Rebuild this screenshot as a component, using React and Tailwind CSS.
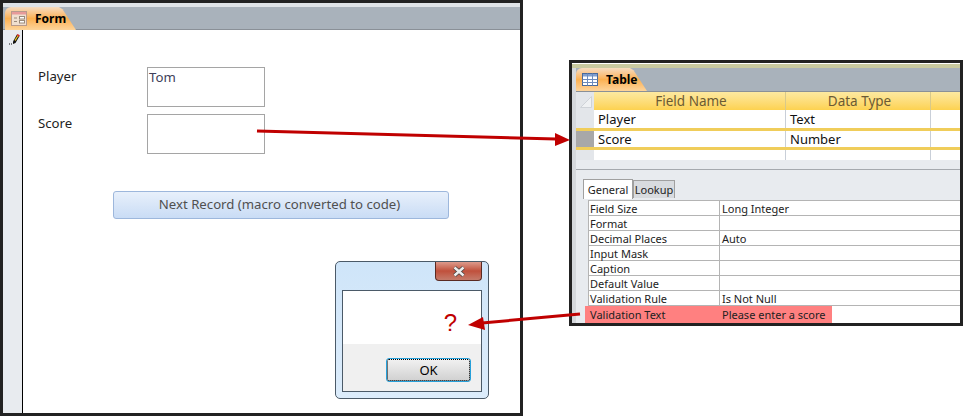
import React from "react";

const propRows = [
  ["Field Size", "Long Integer"],
  ["Format", ""],
  ["Decimal Places", "Auto"],
  ["Input Mask", ""],
  ["Caption", ""],
  ["Default Value", ""],
  ["Validation Rule", "Is Not Null"],
];

function FormIcon() {
  return (
    <svg width="16" height="15" viewBox="0 0 16 15" className="shrink-0">
      <rect x="0.5" y="0.5" width="15" height="14" fill="#f0dfcf" stroke="#b89a8c" />
      <rect x="1" y="1" width="14" height="2.5" fill="#e89a9a" />
      <path d="M3 7h3M3 10.5h3" stroke="#9a8a7a" />
      <rect x="8.5" y="5.5" width="5" height="2.5" fill="#fff" stroke="#9a8a7a" />
      <rect x="8.5" y="9.5" width="5" height="2.5" fill="#fff" stroke="#9a8a7a" />
    </svg>
  );
}

function TableIcon() {
  return (
    <svg width="16" height="13" viewBox="0 0 16 13" className="shrink-0">
      <rect x="0.5" y="0.5" width="15" height="12" fill="#fff" stroke="#4a6a9a" />
      <rect x="1" y="1" width="14" height="2.5" fill="#7f9fd0" />
      <path d="M0.5 6.5h15M0.5 9.5h15M5.5 0.5v12M10.5 0.5v12" stroke="#6d8cbc" />
    </svg>
  );
}

function PencilIcon() {
  return (
    <svg width="13" height="12" viewBox="0 0 13 12">
      <path d="M5 8.5 L9 1.5 L11.5 3 L7.5 10 L5 11 Z" fill="#111" />
      <path d="M8.5 2.5 L9.6 1 L11.8 2.3 L10.8 4 Z" fill="#d12020" />
      <path d="M6.5 7 L9.5 2.5 L10.5 3 L7.5 8 Z" fill="#e8c020" />
      <path d="M1 11h1M3 11h1" stroke="#111" />
    </svg>
  );
}

function Tab({ icon, label }) {
  return (
    <div className="flex h-[23px] w-[71px] items-center gap-[8px] rounded-tl-[6px] bg-gradient-to-b from-[#f6dcc0] via-[#fbb050] to-[#fdd49a] pl-[6px] text-[12px] font-bold text-black [clip-path:polygon(0_0,76%_0,81%_10%,100%_100%,0_100%)]">
      {icon}
      <span>{label}</span>
    </div>
  );
}

export default function App() {
  return (
    <div className="relative flex h-[416px] w-[968px] items-start overflow-hidden bg-white font-['Noto_Sans',sans-serif] text-[13px] text-[#222]">
      {/* form window */}
      <div className="flex h-[416px] w-[523px] shrink-0 flex-col border-[3px] border-[#222]">
        <div className="h-[4px] bg-[#dfe3e7]"></div>
        <div className="h-[23px] border-b border-[#8a9097] bg-[#a9b2bb] pl-[2px]">
          <Tab icon={<FormIcon />} label="Form" />
        </div>
        <div className="flex flex-1">
          <div className="w-[20px] border-r border-black bg-[#e8ebef] pl-[5px] pt-[3px]">
            <PencilIcon />
          </div>
          <div className="relative flex-1 pl-[15px] pt-[37px] text-[13.2px]">
            <div className="flex h-[47px] items-start">
              <span className="w-[109px] leading-[18px]">Player</span>
              <div className="h-[40px] w-[118px] border border-[#a5a5a5] pl-[1px] leading-[18px] text-[#40405a]">
                Tom
              </div>
            </div>
            <div className="flex h-[47px] items-start">
              <span className="w-[109px] leading-[18px]">Score</span>
              <div className="h-[40px] w-[118px] border border-[#a5a5a5]"></div>
            </div>
            <button className="ml-[75px] mt-[30px] block h-[28px] w-[336px] rounded-[3px] border border-[#9db7dc] bg-gradient-to-b from-[#e8f0fb] to-[#c9dcf5] pr-[3px] text-[#505050]">
              Next Record (macro converted to code)
            </button>

            {/* message box floating over the form */}
            <div className="absolute left-[312px] top-[231px] flex h-[138px] w-[154px] flex-col rounded-[5px] border border-[#4b5a68] bg-gradient-to-b from-[#cfe5f9] to-[#dcecfb] px-[6px] pb-[6px]">
              <div className="flex h-[28px] justify-end">
                <div className="flex h-[19px] w-[47px] items-center justify-center rounded-b-[4px] border border-t-0 border-[#5a2a22] bg-gradient-to-b from-[#dc9a8c] via-[#c0503c] to-[#c47a6a]">
                  <svg width="14" height="11" viewBox="0 0 14 11">
                    <path d="M2.5 1.5 L11.5 9.5 M11.5 1.5 L2.5 9.5" stroke="#444" strokeWidth="4" />
                    <path d="M2.5 1.5 L11.5 9.5 M11.5 1.5 L2.5 9.5" stroke="#eee" strokeWidth="2.4" />
                  </svg>
                </div>
              </div>
              <div className="flex flex-1 flex-col border border-[#4b5a68] bg-white">
                <div className="flex h-[53px] items-start justify-end pr-[24px] pt-[17px] font-['Liberation_Sans',sans-serif] text-[24px] leading-[30px] text-[#c00000]">
                  ?
                </div>
                <div className="flex flex-1 items-start justify-end bg-[#f0f0f0] pr-[10px] pt-[14px]">
                  <button className="h-[24px] w-[85px] rounded-[3px] border border-[#26a0da] bg-gradient-to-b from-[#f2f2f2] to-[#d0d0d0] text-[13px] leading-[20px] text-black outline-1 -outline-offset-2 outline-dotted outline-black">
                    OK
                  </button>
                </div>
              </div>
            </div>
          </div>
        </div>
      </div>

      {/* table design window */}
      <div className="ml-[46px] mt-[60px] flex h-[266px] w-[394px] shrink-0 flex-col overflow-hidden border-[3px] border-[#222] bg-[#e8ebef]">
        <div className="h-px shrink-0 bg-white"></div>
        <div className="h-[4px] shrink-0 bg-[#c9caa0]"></div>
        <div className="flex flex-1 flex-col border-l-[4px] border-[#d5d8dc]">
          <div className="h-[24px] border-b border-[#8a9097] bg-[#a9b2bb]">
            <Tab icon={<TableIcon />} label="Table" />
          </div>
          <div className="flex h-[18px] text-[13.5px] text-[#6b5a34]">
            <div className="flex w-[18px] items-end justify-end bg-[#e3e6ea] p-[2px]">
              <svg width="12" height="12" viewBox="0 0 12 12">
                <path d="M11.5 0.5 V11.5 H0.5 Z" fill="#eff1f3" stroke="#cfd3d8" />
              </svg>
            </div>
            <div className="w-[192px] border-r border-[#d8c98a] bg-gradient-to-b from-[#fde9a0] to-[#fdd24f] pl-[3px] text-center leading-[18px]">
              Field Name
            </div>
            <div className="w-[145px] border-r border-[#d8c98a] bg-gradient-to-b from-[#fde9a0] to-[#fdd24f] pl-[3px] text-center leading-[18px]">
              Data Type
            </div>
            <div className="flex-1 bg-gradient-to-b from-[#fde9a0] to-[#fdd24f]"></div>
          </div>
          <div className="flex h-[18px] bg-white leading-[19px] text-[#111]">
            <div className="w-[18px] bg-[#e3e6ea]"></div>
            <div className="w-[192px] border-r border-[#c9cfd8] pl-[4px]">Player</div>
            <div className="w-[145px] border-r border-[#c9cfd8] pl-[4px]">Text</div>
          </div>
          <div className="flex h-[22px] border-y-[3px] border-[#f0cd5a] bg-white leading-[16px] text-[#111]">
            <div className="w-[18px] bg-[#a8a8a8]"></div>
            <div className="w-[192px] border-r border-[#c9cfd8] pl-[4px]">Score</div>
            <div className="w-[145px] border-r border-[#c9cfd8] pl-[4px]">Number</div>
          </div>
          <div className="flex h-[10px] bg-white">
            <div className="w-[18px] bg-[#e3e6ea]"></div>
            <div className="w-[192px] border-r border-[#c9cfd8]"></div>
            <div className="w-[145px] border-r border-[#c9cfd8]"></div>
          </div>
          <div className="h-[10px] border-b border-[#a5a9ae]"></div>

          {/* bottom property pane */}
          <div className="flex items-end pl-[7px] pt-[9px] text-[11px] leading-[15px]">
            <div className="z-10 -mb-px flex h-[20px] w-[50px] items-center justify-center border border-b-0 border-[#a0a0a0] bg-white">
              General
            </div>
            <div className="flex h-[18px] w-[42px] items-center justify-center border border-b-0 border-[#a0a0a0] bg-[#d8dbdf]">
              Lookup
            </div>
          </div>
          <div className="ml-[12px] mt-[2px] flex-1 border-l border-t border-[#b4b4b4] bg-white text-[11px] leading-[15px]">
            {propRows.map(([name, value]) => (
              <div key={name} className="flex h-[15px] border-b border-[#b4b4b4]">
                <div className="w-[131px] border-r border-[#b4b4b4] pl-[1px]">{name}</div>
                <div className="pl-[2px]">{value}</div>
              </div>
            ))}
            <div className="-ml-[4px] flex h-[18px] w-[247px] bg-[#ff8080] leading-[17px]">
              <div className="w-[135px] pl-[5px]">Validation Text</div>
              <div className="pl-[2px]">Please enter a score</div>
            </div>
          </div>
        </div>
      </div>

      {/* callout arrows across both windows */}
      <svg className="pointer-events-none absolute left-0 top-0" width="968" height="416" viewBox="0 0 968 416">
        <path d="M257 131 L556 139" stroke="#c00000" strokeWidth="3" fill="none" />
        <path d="M570 140 L555 133 L555 146 Z" fill="#c00000" />
        <path d="M580 314 L482 323" stroke="#c00000" strokeWidth="3" fill="none" />
        <path d="M468 325 L483 317 L485 330 Z" fill="#c00000" />
      </svg>
    </div>
  );
}
